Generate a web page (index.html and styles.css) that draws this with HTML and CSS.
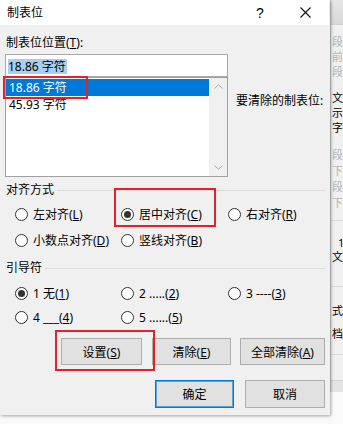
FILE: index.html
```html
<!DOCTYPE html>
<html lang="zh-CN">
<head>
<meta charset="UTF-8">
<title>制表位</title>
<link rel="stylesheet" href="styles.css">
</head>
<body>
<div class="screen">
  <div class="dialog">
    <div class="titlebar">
      <span class="title">制表位</span>
      <span class="help">?</span>
      <span class="close">
        <svg width="11" height="11" viewBox="0 0 11 11"><path d="M0.5 0.5L10.5 10.5M10.5 0.5L0.5 10.5" stroke="#111" stroke-width="1.1" fill="none"/></svg>
      </span>
    </div>

    <div class="dialog-body">
      <div class="top">
        <div class="left">
          <div class="label">制表位位置(<u>T</u>):</div>
          <div class="textbox"><span class="sel">18.86 字符</span></div>
          <div class="listbox">
            <div class="items">
              <div class="item active">18.86 字符</div>
              <div class="item">45.93 字符</div>
            </div>
            <div class="scrollbar">
              <svg width="9" height="5" viewBox="0 0 9 5"><path d="M0.5 4.5L4.5 0.8L8.5 4.5" stroke="#a6a6a6" fill="none"/></svg>
              <svg width="9" height="5" viewBox="0 0 9 5"><path d="M0.5 0.5L4.5 4.2L8.5 0.5" stroke="#a6a6a6" fill="none"/></svg>
            </div>
          </div>
        </div>
        <div class="clear-label">要清除的制表位:</div>
      </div>

      <div class="group align">
        <div class="legend">对齐方式</div>
        <div class="radios">
          <label class="radio"><i></i>左对齐(<u>L</u>)</label>
          <label class="radio checked"><i></i>居中对齐(<u>C</u>)</label>
          <label class="radio"><i></i>右对齐(<u>R</u>)</label>
          <label class="radio"><i></i>小数点对齐(<u>D</u>)</label>
          <label class="radio"><i></i>竖线对齐(<u>B</u>)</label>
        </div>
      </div>

      <div class="group leader">
        <div class="legend">引导符</div>
        <div class="radios">
          <label class="radio checked"><i></i>1 无(<u>1</u>)</label>
          <label class="radio"><i></i>2 .....(<u>2</u>)</label>
          <label class="radio"><i></i>3 ----(<u>3</u>)</label>
          <label class="radio"><i></i>4 ___(<u>4</u>)</label>
          <label class="radio"><i></i>5 ......(<u>5</u>)</label>
        </div>
      </div>

      <div class="buttons">
        <button class="btn w-set">设置(<u>S</u>)</button>
        <button class="btn w-clear">清除(<u>E</u>)</button>
        <button class="btn w-all">全部清除(<u>A</u>)</button>
      </div>

      <div class="buttons footer">
        <button class="btn default w-ok">确定</button>
        <button class="btn w-cancel">取消</button>
      </div>
    </div>

    <!-- red annotation boxes -->
    <div class="mark mark-list"></div>
    <div class="mark mark-center"></div>
    <div class="mark mark-set"></div>
  </div>

  <div class="behind">
    <div class="behind-title"></div>
    <div class="ghost g1">
      <div class="faded">段</div>
      <div class="faded">前</div>
      <div class="faded">段</div>
    </div>
    <div class="ghost g2">
      <div>文</div>
      <div>示</div>
      <div>字</div>
    </div>
    <div class="ghost g3">
      <div class="faded">段</div>
      <div class="faded">下</div>
      <div class="faded">段</div>
      <div class="faded">下</div>
    </div>
    <div class="rule r1"></div>
    <div class="ghost g4">
      <div class="one">1</div>
      <div>文</div>
    </div>
    <div class="rule r2"></div>
    <div class="ghost g5">
      <div>式</div>
      <div>档</div>
    </div>
    <div class="rule r3"></div>
    <div class="behind-foot"></div>
  </div>
</div>
</body>
</html>
```

FILE: styles.css
```css
body {
  margin: 0;
  background: #fafafa;
  font-family: "Noto Sans", "Noto Sans CJK SC", sans-serif;
  font-size: 12px;
  color: #000;
}

u {
  text-decoration: underline;
  text-underline-offset: 1px;
}

.screen {
  display: flex;
  width: 343px;
  height: 424px;
  overflow: hidden;
}

.dialog {
  position: relative;
  width: 330px;
  height: 415px;
  flex: none;
  background: #f0f0f0;
  box-shadow: 1px 1px 3px rgba(0,0,0,.35);
  z-index: 1;
}

.titlebar {
  height: 25px;
  background: #fff;
  display: flex;
  align-items: center;
  padding-left: 7px;
  margin-right: 1px;
}

.title {
  flex: 1;
  line-height: 16px;
}

.help {
  width: 10px;
  font-size: 14px;
  line-height: 16px;
  margin-right: 34px;
  font-family: "Liberation Sans", sans-serif;
}

.close {
  display: flex;
  margin-right: 18px;
}

.dialog-body {
  padding: 10px 5px 0 5px;
}

.top {
  display: flex;
}

.left {
  width: 223px;
  flex: none;
}

.label {
  line-height: 16px;
  padding-left: 1px;
}

.textbox {
  margin-top: 3px;
  height: 23px;
  box-sizing: border-box;
  background: #fff;
  border: 1px solid #a9a9a9;
  padding: 3px 0 0 2px;
}

.sel {
  display: inline-block;
  background: #a8cff2;
  line-height: 15px;
  padding-right: 1px;
}

.listbox {
  height: 100px;
  box-sizing: border-box;
  border: 1px solid #a0a0a0;
  background: #fff;
  display: flex;
}

.items {
  flex: 1;
  padding-top: 1px;
}

.item {
  height: 17px;
  line-height: 17px;
  padding-left: 3px;
}

.item.active {
  background: #0078d7;
  color: #fff;
}

.scrollbar {
  width: 18px;
  background: #f0f0f0;
  display: flex;
  flex-direction: column;
  justify-content: space-between;
  align-items: center;
  padding: 6px 0 6px;
}

.scrollbar svg {
  display: block;
}

.clear-label {
  margin: 58px 0 0 8px;
  line-height: 16px;
  white-space: nowrap;
}

.group .legend {
  display: flex;
  align-items: center;
  line-height: 16px;
  padding-left: 1px;
}

.group .legend::after {
  content: "";
  flex: 1;
  height: 1px;
  background: #dcdcdc;
  margin-left: 3px;
}

.align {
  margin-top: 5px;
}

.leader {
  margin-top: 7px;
}

.radios {
  display: grid;
  grid-template-columns: 106px 107px auto;
  padding-left: 10px;
}

.align .radios {
  margin-top: 3px;
  grid-auto-rows: 26px;
}

.leader .radios {
  margin-top: 5px;
  grid-auto-rows: 24px;
}

.radio {
  display: flex;
  align-items: center;
  white-space: nowrap;
}

.radio i {
  width: 13px;
  height: 13px;
  box-sizing: border-box;
  border: 1px solid #333;
  border-radius: 50%;
  background: #fff;
  margin-right: 5px;
  display: flex;
  align-items: center;
  justify-content: center;
}

.radio.checked i::after {
  content: "";
  width: 7px;
  height: 7px;
  border-radius: 50%;
  background: #333;
}

.buttons {
  display: flex;
  justify-content: flex-end;
  gap: 10px;
  margin-top: 9px;
}

.buttons .w-clear {
  margin-right: -1px;
}

.btn {
  height: 27px;
  box-sizing: border-box;
  background: #e1e1e1;
  border: 1px solid #adadad;
  font-family: inherit;
  font-size: 12px;
  color: #000;
  padding: 0;
}

.w-set { width: 81px; }
.w-clear { width: 79px; }
.w-all { width: 85px; }

.footer {
  margin-top: 15px;
  gap: 11px;
}

.footer .btn {
  height: 28px;
}

.w-ok { width: 79px; }
.w-cancel { width: 80px; }

.btn.default {
  border: 1px solid #0078d7;
  box-shadow: inset 0 0 0 1px #5aa2e0;
}

.mark {
  position: absolute;
  border: 2px solid #e3202b;
  box-sizing: border-box;
}

.mark-list {
  left: 3px;
  top: 76px;
  width: 85px;
  height: 23px;
}

.mark-center {
  left: 114px;
  top: 188px;
  width: 102px;
  height: 39px;
}

.mark-set {
  left: 55px;
  top: 330px;
  width: 100px;
  height: 41px;
}

/* window behind the dialog */
.behind {
  flex: 1;
  height: 392px;
  background: #f0f0f0;
  border-left: 1px solid #cfcfcf;
  overflow: hidden;
  white-space: nowrap;
  font-size: 11px;
}

.behind-title {
  height: 25px;
  background: linear-gradient(#e6e6e6, #d8d8d8);
  border-bottom: 1px solid #cfcfcf;
  box-sizing: border-box;
}

.ghost {
  padding-left: 1px;
}

.ghost div {
  line-height: 15px;
}

.ghost .faded {
  color: #b4b4b4;
}

.g1 { margin-top: 9px; }
.g2 { margin-top: 11px; }
.g3 { margin-top: 12px; }
.g3 div { line-height: 16px; }

.g4 { margin-top: 15px; }
.g4 div { line-height: 14px; }
.g4 .one { padding-left: 6px; }

.g5 { margin-top: 12px; }
.g5 div { line-height: 23px; }

.rule {
  height: 1px;
  background: #dadada;
}

.r1 { margin-top: 9px; }
.r2 { margin-top: 22px; }
.r3 { margin-top: 9px; }

.behind-foot {
  margin-top: 25px;
  height: 12px;
  background: #e4e4e4;
  border-top: 1px solid #d0d0d0;
}
```
